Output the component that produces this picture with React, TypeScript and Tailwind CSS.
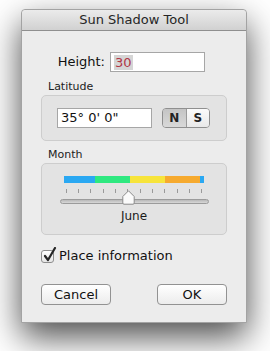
const font = { fontFamily: '"DejaVu Sans", "Liberation Sans", sans-serif' }

const bands = [
  { w: 31, c: 'bg-[#2aa8f2]' },
  { w: 35, c: 'bg-[#2fe880]' },
  { w: 35, c: 'bg-[#f7e43b]' },
  { w: 35, c: 'bg-[#f6aa2f]' },
  { w: 4, c: 'bg-[#2aa8f2]' },
]

function MonthSlider() {
  const ticks = Array.from({ length: 12 }, (_, i) => i)
  return (
    <div className="flex flex-col items-center pt-[12px]">
      <div className="flex h-[7px] w-[140px]">
        {bands.map((b, i) => (
          <div key={i} className={`h-full ${b.c}`} style={{ width: b.w }} />
        ))}
      </div>
      <div className="relative mt-[6px] h-[17px] w-[149px]">
        <div className="flex justify-between px-[6px]">
          {ticks.map((t) => (
            <div key={t} className="h-[4px] w-px bg-[#9a9a9a]" />
          ))}
        </div>
        <div className="absolute left-0 right-0 top-[10px] h-[5px] rounded-full border border-[#9b9b9b] bg-gradient-to-b from-[#b8b8b8] to-[#d8d8d8]" />
        <svg className="absolute left-[62px] top-[1px]" width="13" height="15" viewBox="0 0 13 15">
          <path d="M6.5 0.8 L12.2 6.5 V13 Q12.2 14.2 11 14.2 H2 Q0.8 14.2 0.8 13 V6.5 Z" fill="#fbfbfb" stroke="#8a8a8a" strokeWidth="1" />
        </svg>
      </div>
      <div className="mt-[2px] text-[12px] leading-[16px] text-[#1a1a1a]">June</div>
    </div>
  )
}

export default function App() {
  return (
    <div className="w-[270px] h-[351px] bg-white overflow-hidden pl-[21px] pt-[9px]" style={font}>
      <div className="w-[226px] h-[314px] bg-[#ececec] border border-[#a3a3a3] rounded-t-[4px] shadow-[0_14px_34px_rgba(0,0,0,0.7)] flex flex-col">
        {/* Title bar */}
        <div className="h-[21px] shrink-0 rounded-t-[4px] border-b border-[#8f8f8f] bg-gradient-to-b from-[#ebebeb] to-[#d1d1d1] flex items-center justify-center text-[13px] text-[#262626]">
          Sun Shadow Tool
        </div>

        <div className="flex flex-col px-[19px]">
          {/* Height */}
          <div className="mt-[21px] flex items-center h-[20px]">
            <span className="w-[69px] pr-[5px] text-right text-[13px] leading-[16px] text-[#111]">Height:</span>
            <div className="h-[20px] w-[95px] border border-[#a6a6a6] bg-white flex items-center pl-[3px]">
              <span className="bg-[#d5d5d5] px-px text-[13px] leading-[15px] text-[#b03645]">30</span>
            </div>
          </div>

          {/* Latitude */}
          <div className="mt-[8px] pl-[7px] text-[11px] leading-[13px] text-[#222]">Latitude</div>
          <div className="mt-[2px] h-[46px] w-[186px] rounded-[5px] border border-[#cdcdcd] bg-[#e3e3e3] flex items-center pl-[15px]">
            <div className="h-[20px] w-[95px] border border-[#a6a6a6] bg-white flex items-center pl-[3px] text-[13px] leading-[16px] text-[#111]">
              35° 0' 0"
            </div>
            <div className="ml-[10px] flex h-[20px] w-[48px] rounded-[4px] border border-[#8f8f8f] overflow-hidden text-[12px] leading-[16px] font-bold text-[#222]">
              <div className="flex-1 flex items-center justify-center bg-gradient-to-b from-[#c4c4c4] to-[#d9d9d9] border-r border-[#9a9a9a]">N</div>
              <div className="flex-1 flex items-center justify-center bg-gradient-to-b from-[#fbfbfb] to-[#e9e9e9]">S</div>
            </div>
          </div>

          {/* Month */}
          <div className="mt-[7px] pl-[7px] text-[11px] leading-[13px] text-[#222]">Month</div>
          <div className="mt-[2px] h-[72px] w-[186px] rounded-[5px] border border-[#cdcdcd] bg-[#e3e3e3]">
            <MonthSlider />
          </div>

          {/* Checkbox */}
          <div className="mt-[14px] flex items-center h-[14px]">
            <div className="relative h-[13px] w-[13px] rounded-[3px] border border-[#8e8e8e] bg-gradient-to-b from-white to-[#e6e6e6]">
              <svg className="absolute left-[1px] top-[-4px]" width="14" height="16" viewBox="0 0 14 16">
                <path d="M2 9 L5 13 L12 1" fill="none" stroke="#262626" strokeWidth="2.2" strokeLinecap="round" strokeLinejoin="round" />
              </svg>
            </div>
            <span className="ml-[5px] text-[13px] leading-[16px] text-[#111]">Place information</span>
          </div>

          {/* Buttons */}
          <div className="mt-[21px] flex justify-between w-[186px]">
            <button className="h-[21px] w-[70px] rounded-[4px] border border-[#929292] bg-gradient-to-b from-white to-[#ececec] text-[13px] leading-[16px] text-[#111]">
              Cancel
            </button>
            <button className="h-[21px] w-[70px] rounded-[4px] border border-[#929292] bg-gradient-to-b from-white to-[#ececec] text-[13px] leading-[16px] text-[#111]">
              OK
            </button>
          </div>
        </div>
      </div>
    </div>
  )
}
